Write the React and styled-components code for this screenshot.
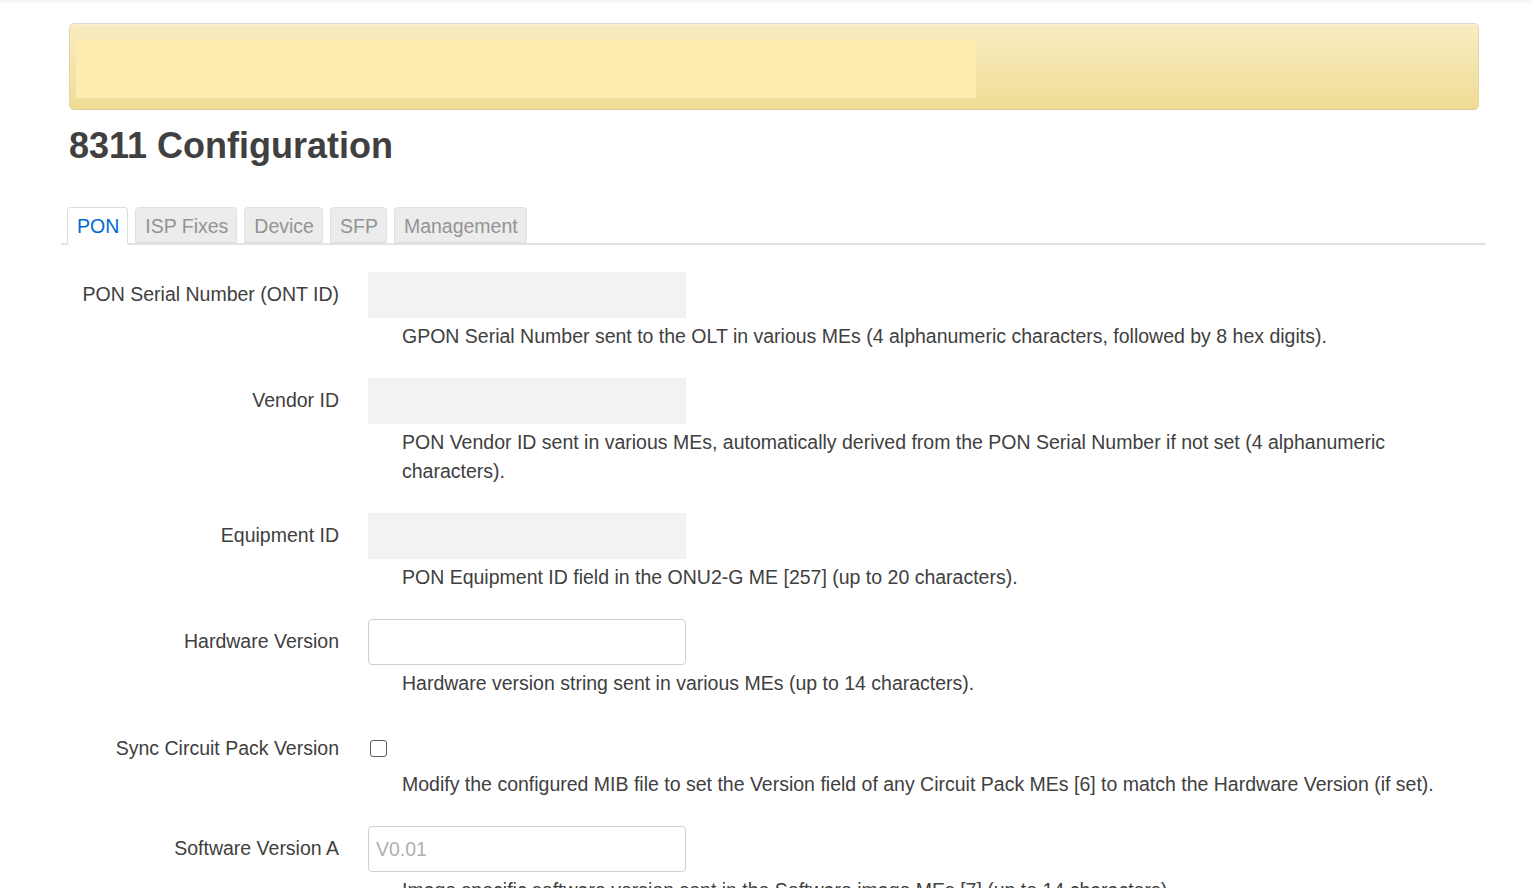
import React from 'react';
import styled, { createGlobalStyle } from 'styled-components';

const GlobalStyle = createGlobalStyle`
  html, body {
    margin: 0;
    padding: 0;
    background: #fff;
  }
  body {
    font-family: "Liberation Sans", Arial, sans-serif;
    font-size: 19.5px;
    color: #404040;
  }
`;

const TopShade = styled.div`
  height: 3px;
  background: linear-gradient(#f3f3f3, #fafafa);
`;

const Container = styled.div`
  width: 1425px;
  margin-left: 61px;
`;

const Alert = styled.div`
  margin: 20px 7px 0 8px;
  height: 87px;
  box-sizing: border-box;
  padding: 16px 0 11px 6px;
  border: 1px solid #e2d9a8;
  border-top-color: #dcd6dc;
  border-bottom-color: #d8cc9a;
  border-radius: 5px;
  background: linear-gradient(#faecc3, #eedc94);
  box-shadow: inset 0 1px 0 rgba(255, 255, 255, 0.3);
`;

const AlertFill = styled.div`
  width: 900px;
  height: 100%;
  background: #feebb0;
`;

const Title = styled.h2`
  margin: 18px 0 0 8px;
  font-size: 36px;
  line-height: 36px;
  font-weight: bold;
  color: #404040;
`;

const TabBar = styled.ul`
  display: flex;
  gap: 7px;
  list-style: none;
  margin: 43px 0 0;
  padding: 0 0 0 6px;
  border-bottom: 2px solid #e2e2e2;
  height: 36px;
`;

const Tab = styled.li`
  box-sizing: border-box;
  height: ${p => (p.$active ? '38px' : '36px')};
  padding: 1px 8px 0 9px;
  line-height: 34px;
  border: 1px solid ${p => (p.$active ? '#dcdcdc' : '#e0e0e0')};
  border-bottom-color: ${p => (p.$active ? '#fff' : '#e0e0e0')};
  border-radius: 4px 4px 0 0;
  background: ${p => (p.$active ? '#fff' : '#ececec')};
  color: ${p => (p.$active ? '#0069d6' : '#939393')};
`;

const Form = styled.div`
  margin-top: 27px;
  display: grid;
  grid-template-columns: 278px 1fr;
  column-gap: 29px;
`;

const Label = styled.div`
  height: ${p => (p.$compact ? '36px' : '46px')};
  line-height: ${p => (p.$compact ? '36px' : '44px')};
  margin-top: ${p => (p.$compact ? '6px' : '0')};
  text-align: right;
  white-space: nowrap;
`;

const Control = styled.div`
  height: ${p => (p.$compact ? '36px' : '46px')};
  margin-top: ${p => (p.$compact ? '6px' : '0')};
  display: flex;
  align-items: center;
`;

const Field = styled.input`
  box-sizing: border-box;
  width: 318px;
  height: 46px;
  margin: 0;
  padding: 0 7px;
  font: inherit;
  color: #404040;
  outline: none;
  border: 1px solid ${p => (p.$flat ? '#f2f2f4' : '#cfcfcf')};
  border-radius: ${p => (p.$flat ? '0' : '4px')};
  background: ${p => (p.$flat ? '#f2f2f4' : '#fff')};

  &::placeholder {
    color: #b0b0b0;
  }
`;

const Check = styled.input.attrs({ type: 'checkbox' })`
  appearance: none;
  box-sizing: border-box;
  width: 17px;
  height: 17px;
  margin: 1px 0 0 2px;
  border: 1.5px solid #5a5a5a;
  border-radius: 3px;
  background: #fff;
`;

const Description = styled.div`
  grid-column: 2;
  margin: 4px 24px 26.5px 34px;
  line-height: 29.25px;
`;

const fields = [
  {
    label: 'PON Serial Number (ONT ID)',
    kind: 'flat',
    desc: 'GPON Serial Number sent to the OLT in various MEs (4 alphanumeric characters, followed by 8 hex digits).',
  },
  {
    label: 'Vendor ID',
    kind: 'flat',
    desc: 'PON Vendor ID sent in various MEs, automatically derived from the PON Serial Number if not set (4 alphanumeric characters).',
  },
  {
    label: 'Equipment ID',
    kind: 'flat',
    desc: 'PON Equipment ID field in the ONU2-G ME [257] (up to 20 characters).',
  },
  {
    label: 'Hardware Version',
    kind: 'text',
    desc: 'Hardware version string sent in various MEs (up to 14 characters).',
  },
  {
    label: 'Sync Circuit Pack Version',
    kind: 'check',
    desc: 'Modify the configured MIB file to set the Version field of any Circuit Pack MEs [6] to match the Hardware Version (if set).',
  },
  {
    label: 'Software Version A',
    kind: 'text',
    placeholder: 'V0.01',
    desc: 'Image specific software version sent in the Software image MEs [7] (up to 14 characters).',
  },
];

const tabs = ['PON', 'ISP Fixes', 'Device', 'SFP', 'Management'];

function App() {
  return (
    <>
      <GlobalStyle />
      <TopShade />
      <Container>
        <Alert>
          <AlertFill />
        </Alert>
        <Title>8311 Configuration</Title>
        <TabBar>
          {tabs.map((t, i) => (
            <Tab key={t} $active={i === 0}>{t}</Tab>
          ))}
        </TabBar>
        <Form>
          {fields.map(f => (
            <React.Fragment key={f.label}>
              <Label $compact={f.kind === 'check'}>{f.label}</Label>
              <Control $compact={f.kind === 'check'}>
                {f.kind === 'check' ? (
                  <Check />
                ) : (
                  <Field $flat={f.kind === 'flat'} placeholder={f.placeholder} />
                )}
              </Control>
              <Description>{f.desc}</Description>
            </React.Fragment>
          ))}
        </Form>
      </Container>
    </>
  );
}

export default App;
